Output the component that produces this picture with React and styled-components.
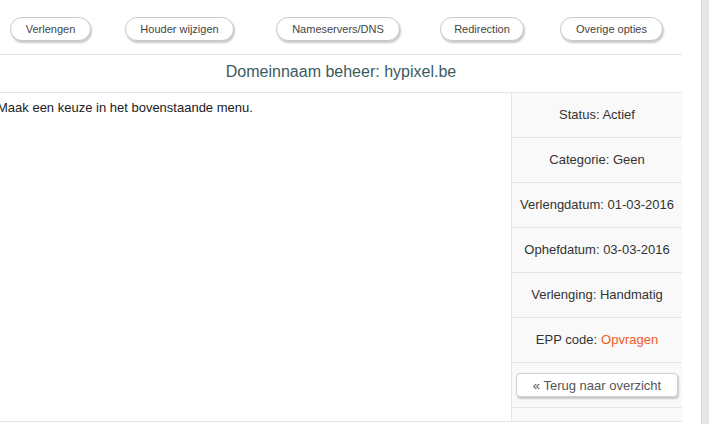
import React from 'react';
import styled, { createGlobalStyle } from 'styled-components';

const GlobalStyle = createGlobalStyle`
	html, body {
		margin: 0;
		padding: 0;
		background: #fff;
		overflow: hidden;
	}

	body {
		font-family: "Liberation Sans", Arial, sans-serif;
		color: #333;
	}
`;

const Page = styled.div`
	display: flex;
	height: 424px;
	width: 709px;
`;

const Container = styled.div`
	width: 682px;
	display: flex;
	flex-direction: column;
`;

const Strip = styled.div`
	margin-left: auto;
	width: 7px;
	background: #e6e6e6;
	border-left: 1px solid #dcdcdc;
`;

const Toolbar = styled.div`
	display: flex;
	align-items: flex-start;
	height: 55px;
	padding-top: 17px;
	box-sizing: border-box;
	border-bottom: 1px solid #e5e5e5;
`;

const MenuButton = styled.button`
	height: 24px;
	margin-left: ${(p) => p.$gap}px;
	padding: 0;
	box-sizing: border-box;
	width: ${(p) => p.$w}px;
	white-space: nowrap;
	border: 1px solid #c9c9c9;
	border-radius: 12px;
	background: #fff;
	box-shadow: 1px 2px 2px rgba(0, 0, 0, 0.22);
	font-family: "Liberation Sans", Arial, sans-serif;
	font-size: 11px;
	color: #444;
	cursor: pointer;
`;

const Title = styled.h1`
	margin: 0;
	height: 37px;
	line-height: 33px;
	text-align: center;
	font-size: 16px;
	font-weight: 400;
	color: #3b5b5e;
	border-bottom: 1px solid #e5e5e5;
`;

const Body = styled.div`
	display: flex;
	border-bottom: 1px solid #e5e5e5;
`;

const Main = styled.div`
	flex: 1;
	padding-top: 7px;
`;

const Intro = styled.p`
	margin: 0 0 0 -3px;
	font-size: 13px;
	line-height: 15px;
	color: #222;
`;

const Sidebar = styled.div`
	width: 170px;
	background: #f9f9f9;
	border-left: 1px solid #e5e5e5;
`;

const InfoRow = styled.div`
	height: 43px;
	padding-bottom: 1px;
	display: flex;
	align-items: center;
	justify-content: center;
	border-bottom: 1px solid #e5e5e5;
	font-size: 13px;
	color: #333;
`;

const Accent = styled.a`
	color: #f05a28;
	text-decoration: none;
	margin-left: 4px;
`;

const ButtonRow = styled.div`
	height: 45px;
	padding: 10px 4px 0;
	box-sizing: border-box;
	border-bottom: 1px solid #e5e5e5;
`;

const BackButton = styled.button`
	display: block;
	width: 100%;
	height: 24px;
	border: 1px solid #cfcfcf;
	border-radius: 4px;
	background: #fff;
	box-shadow: 1px 2px 2px rgba(0, 0, 0, 0.2);
	font-family: "Liberation Sans", Arial, sans-serif;
	font-size: 13px;
	color: #555;
	cursor: pointer;
`;

const Foot = styled.div`
	height: 13px;
`;

const menu = [
	{ label: 'Verlengen', gap: 10, w: 81 },
	{ label: 'Houder wijzigen', gap: 34, w: 109 },
	{ label: 'Nameservers/DNS', gap: 42, w: 124 },
	{ label: 'Redirection', gap: 40, w: 84 },
	{ label: 'Overige opties', gap: 36, w: 103 },
];

const info = [
	['Status:', 'Actief'],
	['Categorie:', 'Geen'],
	['Verlengdatum:', '01-03-2016'],
	['Ophefdatum:', '03-03-2016'],
	['Verlenging:', 'Handmatig'],
];

const App = () => {
	return (
		<>
			<GlobalStyle />
			<Page>
				<Container>
					<Toolbar>
						{menu.map((m) => (
							<MenuButton key={m.label} $gap={m.gap} $w={m.w}>{m.label}</MenuButton>
						))}
					</Toolbar>

					<Title>Domeinnaam beheer: hypixel.be</Title>

					<Body>
						<Main>
							<Intro>Maak een keuze in het bovenstaande menu.</Intro>
						</Main>

						<Sidebar>
							{info.map(([k, v]) => (
								<InfoRow key={k}>{k} {v}</InfoRow>
							))}
							<InfoRow>EPP code:<Accent href="#">Opvragen</Accent></InfoRow>
							<ButtonRow>
								<BackButton>« Terug naar overzicht</BackButton>
							</ButtonRow>
							<Foot />
						</Sidebar>
					</Body>
				</Container>
				<Strip />
			</Page>
		</>
	);
};

export default App;
